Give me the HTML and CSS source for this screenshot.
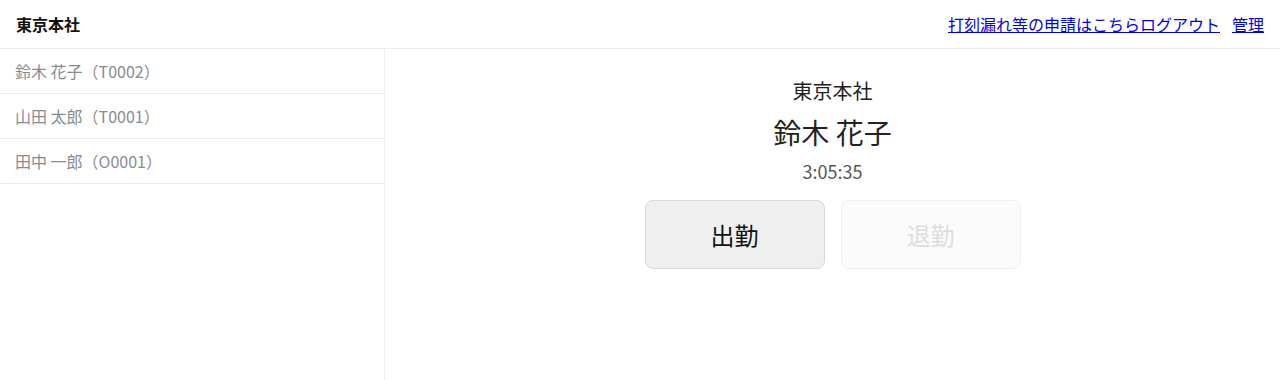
FILE: index.html
```html
<!DOCTYPE html>
<html lang="ja">
<head>
  <meta charset="UTF-8">
  <meta name="viewport" content="width=device-width, initial-scale=1.0">
  <title>打刻</title>
  <link rel="stylesheet" href="styles.css">
</head>
<body>
  <div class="header">
    <div class="brand">東京本社</div>
    <div class="links">
      <a href="#">打刻漏れ等の申請はこちら</a><a href="#">ログアウト</a>
      <a href="#" class="admin">管理</a>
    </div>
  </div>

  <div class="layout">
    <!-- 従業員一覧 -->
    <div class="sidebar">
      <div class="employee">鈴木 花子（T0002）</div>
      <div class="employee">山田 太郎（T0001）</div>
      <div class="employee">田中 一郎（O0001）</div>
    </div>

    <div class="main">
      <p class="office">東京本社</p>
      <p class="name">鈴木 花子</p>
      <p class="clock">3:05:35</p>
      <div class="buttons">
        <button class="btn">出勤</button>
        <button class="btn" disabled>退勤</button>
      </div>
    </div>
  </div>
</body>
</html>
```

FILE: styles.css
```css
body {
  font-family: "Noto Sans CJK JP", "Noto Sans", sans-serif;
  margin: 0;
  padding: 0;
  background-color: #fff;
  color: #222;
}

.header {
  display: flex;
  justify-content: space-between;
  align-items: center;
  height: 48px;
  padding: 0 16px;
  border-bottom: 1px solid #eee;
}

.brand {
  font-size: 16px;
  font-weight: bold;
  color: #111;
}

.links {
  display: flex;
  font-size: 16px;
}

.links a {
  color: #0000ee;
}

.links .admin {
  margin-left: 12px;
}

.layout {
  display: flex;
  height: 331px;
}

.sidebar {
  box-sizing: border-box;
  width: 385px;
  border-right: 1px solid #eee;
}

.employee {
  height: 44px;
  line-height: 44px;
  padding-left: 15px;
  font-size: 16px;
  color: #878c93;
  border-bottom: 1px solid #eee;
}

.main {
  flex: 1;
  display: flex;
  flex-direction: column;
  align-items: center;
  padding-top: 27px;
}

.main p {
  margin: 0;
}

.office {
  font-size: 20px;
  line-height: 30px;
}

.name {
  font-size: 28px;
  line-height: 46px;
  margin-top: 3px !important;
}

.clock {
  font-size: 18px;
  line-height: 28px;
  color: #555;
  margin-top: 2px !important;
}

.buttons {
  display: flex;
  gap: 16px;
  margin-top: 15px;
}

.btn {
  width: 180px;
  height: 69px;
  font-family: inherit;
  font-size: 24px;
  color: #111;
  background-color: #efefef;
  border: 1px solid #d8d8d8;
  border-radius: 8px;
}

.btn:disabled {
  background-color: #fbfbfb;
  border-color: #efefef;
  color: #ddd;
}
```
